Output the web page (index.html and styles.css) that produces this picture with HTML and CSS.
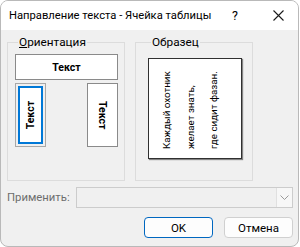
FILE: index.html
```html
<!DOCTYPE html>
<html lang="ru">

<head>
	<meta charset="UTF-8">
	<title>Направление текста - Ячейка таблицы</title>
	<link rel="stylesheet" href="styles.css">
</head>

<body>
	<div class="dialog">
		<div class="titlebar">
			<span class="title">Направление текста - Ячейка таблицы</span>
			<span class="help">?</span>
			<span class="close">
				<svg width="11" height="11" viewBox="0 0 11 11">
					<path d="M0.5 0.5 L10.5 10.5 M10.5 0.5 L0.5 10.5" stroke="#1a1a1a" stroke-width="1.1" fill="none" />
				</svg>
			</span>
		</div>

		<div class="content">
			<div class="groups">
				<!-- Orientation choices -->
				<fieldset class="group orient">
					<legend><u>О</u>риентация</legend>
					<div class="btn-h">Текст</div>
					<div class="vrow">
						<div class="btn-v focused">
							<div class="selected"><span class="up">Текст</span></div>
						</div>
						<div class="btn-v"><span class="down">Текст</span></div>
					</div>
				</fieldset>

				<!-- Preview -->
				<fieldset class="group sample">
					<legend>Образец</legend>
					<div class="paper">
						<p>Каждый охотник<br>желает знать,<br>где сидит фазан.</p>
					</div>
				</fieldset>
			</div>

			<div class="apply">
				<span class="apply-label">Применить:</span>
				<div class="combo">
					<div class="combo-arrow">
						<svg width="9" height="5" viewBox="0 0 9 5">
							<path d="M0.5 0.5 L4.5 4.5 L8.5 0.5" stroke="#9a9a9a" stroke-width="1" fill="none" />
						</svg>
					</div>
				</div>
			</div>

			<div class="buttons">
				<button class="btn default">OK</button>
				<button class="btn">Отмена</button>
			</div>
		</div>
	</div>
</body>

</html>
```

FILE: styles.css
```css
body {
	margin: 0;
	background: #ffffff;
	font-family: Roboto, "Noto Sans", sans-serif;
	font-size: 11.3px;
	color: #000;
}

.dialog {
	width: 299px;
	height: 247px;
	box-sizing: border-box;
	border: 1px solid #b9b9b9;
	border-radius: 8px;
	overflow: hidden;
	background: #f0f0f0;
	display: flex;
	flex-direction: column;
}

.titlebar {
	height: 29px;
	background: #ffffff;
	display: flex;
	align-items: center;
	padding-left: 8px;
	flex-shrink: 0;
	white-space: nowrap;
}

.title {
	flex: 1;
	line-height: 16px;
	font-size: 11.2px;
}

.help {
	width: 8px;
	margin-right: 33px;
	font-size: 12.5px;
}

.close {
	width: 11px;
	height: 11px;
	margin-right: 14px;
	display: flex;
}

.content {
	padding: 4px 5px 0 6px;
	flex: 1;
	display: flex;
	flex-direction: column;
}

.groups {
	display: flex;
	gap: 10px;
}

.group {
	margin: 0;
	border: 1px solid #dcdcdc;
	width: 118px;
	height: 147px;
	box-sizing: border-box;
	padding: 4px 0 0 0;
}

.group legend {
	padding: 0 1px;
	margin-left: 3px;
	line-height: 16px;
	font-size: 11.8px;
}

.orient {
	padding-left: 7px;
}

.btn-h {
	width: 103px;
	height: 26px;
	box-sizing: border-box;
	border: 1px solid #8a8a8a;
	background: #fff;
	font-weight: bold;
	font-size: 10.5px;
	display: flex;
	align-items: center;
	justify-content: center;
}

.vrow {
	display: flex;
	justify-content: space-between;
	width: 103px;
	margin-top: 3px;
}

.btn-v {
	width: 31px;
	height: 64px;
	box-sizing: border-box;
	border: 1px solid #8a8a8a;
	background: #fff;
	font-weight: bold;
	font-size: 10.5px;
	display: flex;
	align-items: center;
	justify-content: center;
}

.btn-v.focused {
	border: 1px dotted #333;
	outline: 1px solid #a8a8a8;
	outline-offset: -1px;
	padding: 2px;
	background: #f0f0f0;
}

.selected {
	width: 100%;
	height: 100%;
	box-sizing: border-box;
	border: 2px solid #0078d7;
	background: #fff;
	display: flex;
	align-items: center;
	justify-content: center;
}

.up {
	writing-mode: vertical-rl;
	transform: rotate(180deg);
}

.down {
	writing-mode: vertical-rl;
}

.sample {
	padding-left: 12px;
	padding-top: 8px;
}

.paper {
	width: 94px;
	height: 101px;
	box-sizing: border-box;
	border: 1px solid #303030;
	background: #fff;
	box-shadow: 1px 1px 1px rgba(0, 0, 0, 0.45);
	display: flex;
	justify-content: flex-start;
	padding-left: 6px;
}

.paper p {
	margin: 0;
	writing-mode: vertical-rl;
	transform: rotate(180deg);
	white-space: nowrap;
	line-height: 23.5px;
	font-size: 9.8px;
	padding-top: 9px;
}

.apply {
	display: flex;
	align-items: center;
	margin-top: 6px;
}

.apply-label {
	color: #6d6d6d;
	width: 69px;
	flex-shrink: 0;
	white-space: nowrap;
}

.combo {
	width: 217px;
	height: 21px;
	box-sizing: border-box;
	border: 1px solid #cccccc;
	background: #f0f0f0;
	display: flex;
	justify-content: flex-end;
}

.combo-arrow {
	width: 15px;
	border-left: 1px solid #e0e0e0;
	background: #f7f7f7;
	display: flex;
	align-items: center;
	justify-content: center;
}

.buttons {
	display: flex;
	justify-content: flex-end;
	gap: 11px;
	margin-top: 9px;
}

.btn {
	width: 69px;
	height: 21px;
	box-sizing: border-box;
	border: 1px solid #d0d0d0;
	border-radius: 4px;
	background: #fdfdfd;
	font-family: inherit;
	font-size: 11.5px;
	padding: 0;
	color: #000;
}

.btn.default {
	border-color: #0067c0;
}
```
